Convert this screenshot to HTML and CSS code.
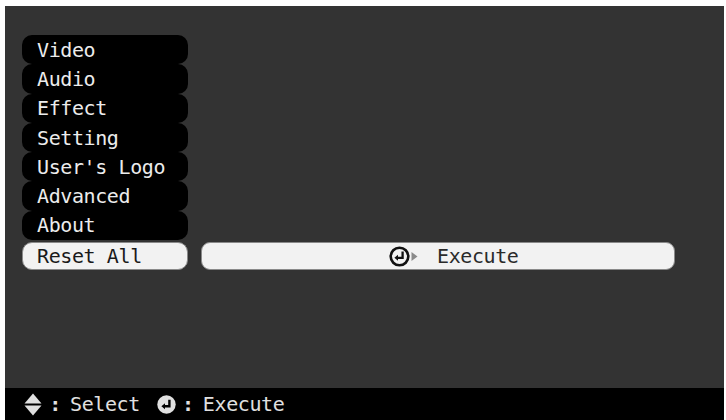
FILE: index.html
```html
<!DOCTYPE html>
<html>
<head>
<meta charset="utf-8">
<link rel="stylesheet" href="styles.css">
</head>
<body>
<div class="screen">
  <div class="main">
    <div class="menu">
      <div class="item">Video</div>
      <div class="item">Audio</div>
      <div class="item">Effect</div>
      <div class="item">Setting</div>
      <div class="item">User's Logo</div>
      <div class="item">Advanced</div>
      <div class="item">About</div>
      <div class="row">
        <div class="item sel">Reset All</div>
        <div class="exec">
          <svg class="enter" width="21" height="21" viewBox="0 0 21 21">
            <circle cx="10.5" cy="10.5" r="8.8" fill="#f2f2f2" stroke="#111" stroke-width="2.6"/>
            <path d="M13.6 5.6 V11.8 H8" fill="none" stroke="#111" stroke-width="2.3"/>
            <path d="M5.4 11.8 L9 8.8 L9 14.8 Z" fill="#111"/>
          </svg>
          <svg class="tri" width="7" height="11" viewBox="0 0 7 11"><path d="M0.5 1 L6.5 5.5 L0.5 10 Z" fill="#8a8a8a"/></svg>
          <span class="exec-text">Execute</span>
        </div>
      </div>
    </div>
  </div>
  <div class="bar">
    <svg class="updown" width="18" height="23" viewBox="0 0 18 23">
      <path d="M9 0.5 L17.5 10.5 L0.5 10.5 Z" fill="#e0e0e0"/>
      <path d="M0.5 12.5 L17.5 12.5 L9 22.5 Z" fill="#e0e0e0"/>
    </svg>
    <span class="colon c1">:</span>
    <span class="label">Select</span>
    <svg class="enter2" width="19" height="19" viewBox="0 0 19 19">
      <circle cx="9.5" cy="9.5" r="9.2" fill="#e0e0e0"/>
      <path d="M12.4 4.8 V11.2 H7" fill="none" stroke="#000" stroke-width="2.4"/>
      <path d="M4.4 11.2 L8 8.2 L8 14.2 Z" fill="#000"/>
    </svg>
    <span class="colon c2">:</span>
    <span class="label">Execute</span>
  </div>
</div>
</body>
</html>
```
FILE: styles.css
```css
html, body {
  margin: 0;
  padding: 0;
  background: #ffffff;
}
body {
  width: 726px;
  height: 420px;
  overflow: hidden;
}
.screen {
  margin: 6px 0 0 5px;
  width: 719px;
  height: 414px;
  background: #333333;
  display: flex;
  flex-direction: column;
  font-family: "DejaVu Sans Mono", "Liberation Mono", monospace;
  font-size: 20px;
  letter-spacing: -0.4px;
}
.main {
  flex: 1;
  padding: 29px 0 0 17px;
}
.menu {
  display: flex;
  flex-direction: column;
}
.item {
  width: 166px;
  height: 29.3px;
  box-sizing: border-box;
  background: #000;
  color: #ececec;
  border-radius: 10px;
  padding-left: 15px;
  display: flex;
  align-items: center;
}
.row {
  display: flex;
  gap: 13px;
  margin-top: 2px;
}
.item.sel {
  height: 28px;
  background: #f2f2f2;
  color: #1a1a1a;
  border: 1px solid #8a8a8a;
  padding-left: 14px;
}
.exec {
  width: 474px;
  height: 28px;
  box-sizing: border-box;
  background: #f2f2f2;
  border: 1px solid #8a8a8a;
  border-radius: 9px;
  display: flex;
  align-items: center;
  padding-left: 187px;
  color: #2a2a2a;
}
.enter {
  display: block;
}
.tri {
  display: block;
  margin-left: 1px;
}
.exec-text {
  margin-left: 19px;
}
.bar {
  height: 32px;
  background: #000;
  color: #e0e0e0;
  display: flex;
  align-items: center;
  padding-left: 19px;
}
.updown {
  display: block;
}
.colon {
  display: block;
  width: 12px;
  text-align: center;
  font-weight: bold;
}
.c1 {
  margin-left: 7px;
  margin-right: 9px;
}
.enter2 {
  display: block;
  margin-left: 17px;
}
.c2 {
  margin-left: 6px;
  margin-right: 9px;
}
```
